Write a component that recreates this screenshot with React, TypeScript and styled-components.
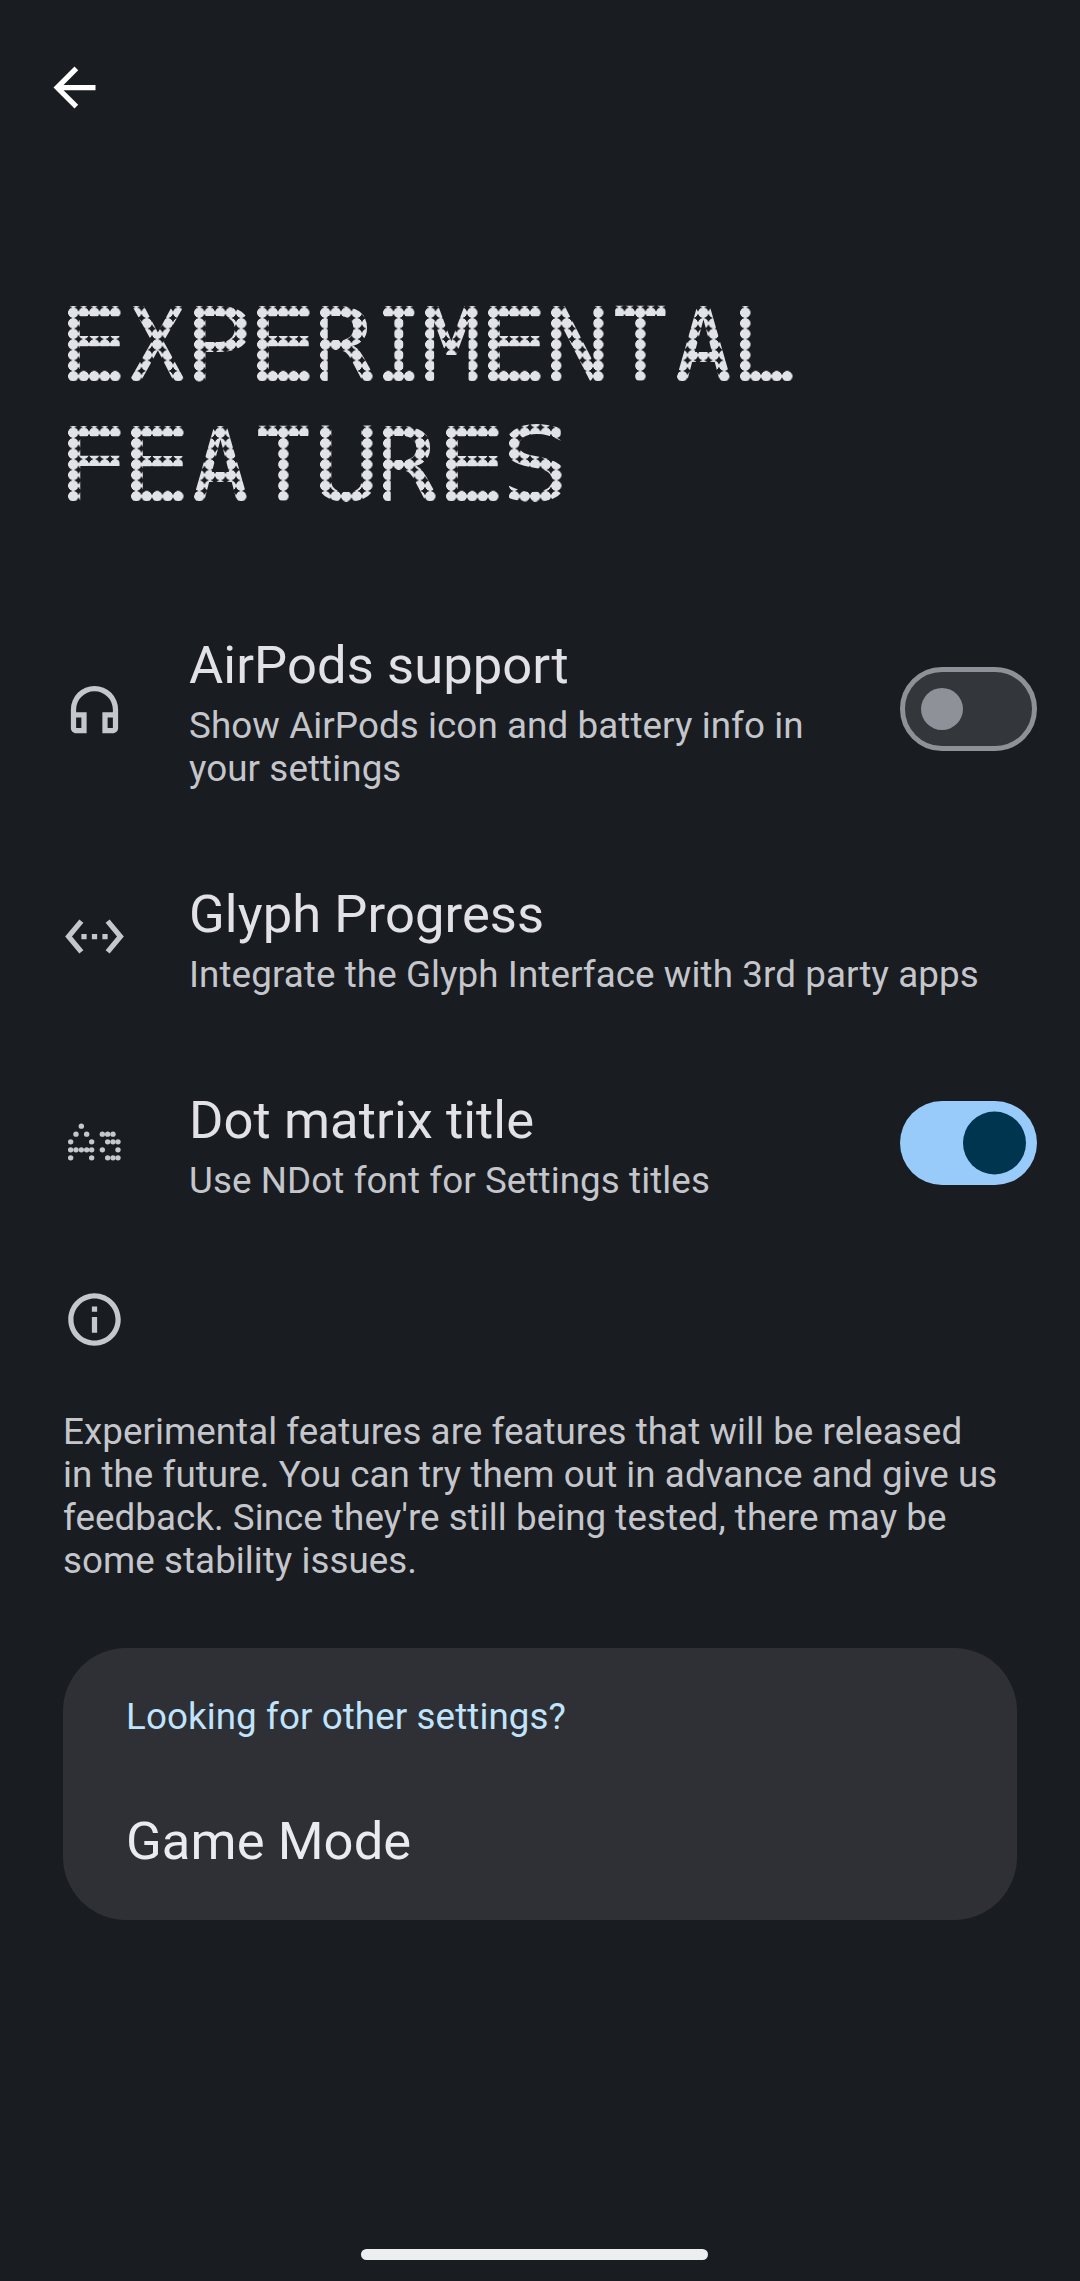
import styled, { createGlobalStyle } from "styled-components";

const GlobalStyle = createGlobalStyle`
  html, body {
    margin: 0;
    padding: 0;
    background: #191c20;
  }
  body {
    font-family: Roboto, "Noto Sans", sans-serif;
    letter-spacing: 0.09px;
  }
`;

const Page = styled.div`
  position: relative;
  width: 1080px;
  height: 2281px;
  overflow: hidden;
  background: #191c20;
`;

const TopBar = styled.div`
  display: flex;
  align-items: center;
  height: 63px;
  padding: 56px 0 0 43px;
  color: #ffffff;
`;

const Icon = styled.svg`
  display: block;
  width: 63px;
  height: 63px;
  fill: currentColor;
  flex: none;
`;

const PageTitle = styled.h1`
  margin: 153px 0 0 68px;
  font-weight: 400;
`;

const TitleLine = styled.div`
  display: flex;
  height: 120.3px;
`;

const LetterCell = styled.span<{ $cols: number }>`
  display: block;
  flex: none;
  width: ${(p) => p.$cols * 10.5}px;
  margin-right: 10.5px;
  height: 120.3px;
`;

/* real letters stretched to the cell, with the dot grid showing through them */
const DotGlyph = styled.span<{ $k: number; $x: number; $cols: number }>`
  display: block;
  box-sizing: border-box;
  width: ${(p) => (p.$cols * 10.5) / p.$k}px;
  height: 120.3px;
  padding-top: 14px;
  font-family: "DejaVu Sans Mono", monospace;
  font-size: 100px;
  line-height: 120px;
  letter-spacing: 0;
  white-space: nowrap;
  text-indent: ${(p) => -p.$x}px;
  color: transparent;
  -webkit-text-stroke: 2px transparent;
  transform: scaleX(${(p) => p.$k});
  transform-origin: 0 0;
  background-image: radial-gradient(
    ${(p) => 5.4 / p.$k}px 5.4px at center,
    #e1e3e8 90%,
    rgba(225, 227, 232, 0) 100%
  );
  background-size: ${(p) => 10.5 / p.$k}px 10.6px;
  background-position: 0 3.6px;
  -webkit-background-clip: text;
  background-clip: text;
`;

const SettingsList = styled.div`
  margin-top: 75px;
`;

const Row = styled.div`
  display: flex;
  align-items: center;
  padding: 42px 43px 47px 63px;
`;

const RowIcon = styled.div`
  width: 126px;
  flex: none;
  margin-bottom: 1px;
  color: #c5c7cc;
`;

const RowBody = styled.div`
  flex: 1;
  min-width: 0;
`;

const RowTitle = styled.div`
  font-size: 52.5px;
  line-height: 70px;
  color: #e2e2e6;
  margin-bottom: 4px;
`;

const RowSummary = styled.div`
  font-size: 36.75px;
  line-height: 43px;
  color: #c4c6cc;
  max-width: 680px;
`;

const WideSummary = styled(RowSummary)`
  max-width: none;
  white-space: nowrap;
`;

const Toggle = styled.div<{ $on?: boolean }>`
  position: relative;
  flex: none;
  box-sizing: border-box;
  width: 137px;
  height: 84px;
  margin-left: 40px;
  margin-bottom: 1px;
  border-radius: 42px;
  background: ${(p) => (p.$on ? "#98cbfa" : "#33363b")};
  border: ${(p) => (p.$on ? "none" : "5px solid #8e9198")};
`;

const Thumb = styled.div<{ $on?: boolean }>`
  position: absolute;
  top: 50%;
  border-radius: 50%;
  transform: translateY(-50%);
  width: ${(p) => (p.$on ? "63px" : "42px")};
  height: ${(p) => (p.$on ? "63px" : "42px")};
  left: ${(p) => (p.$on ? "63px" : "16px")};
  background: ${(p) => (p.$on ? "#003550" : "#8e9198")};
`;

const InfoBlock = styled.div`
  padding: 39px 63px 0;
  color: #c5c7cc;
`;

const InfoIconWrap = styled.div`
  margin-bottom: 59px;
`;

const InfoText = styled.p`
  margin: 0;
  font-size: 36.75px;
  line-height: 43px;
  letter-spacing: 0.05px;
  color: #c4c6cc;
`;

const Card = styled.div`
  box-sizing: border-box;
  width: 954px;
  height: 272px;
  margin: 66px 0 0 63px;
  padding: 46px 63px 0;
  border-radius: 63px;
  background: #2e3035;
`;

const CardLabel = styled.div`
  font-size: 36.75px;
  line-height: 46px;
  color: #c0e4fd;
`;

const CardItem = styled.div`
  margin-top: 66px;
  font-size: 52.5px;
  line-height: 70px;
  color: #e9ebf0;
`;

const NavPill = styled.div`
  position: absolute;
  left: 361px;
  top: 2249px;
  width: 347px;
  height: 11px;
  border-radius: 6px;
  background: #eceef0;
`;

const AA_DOTS: [number, number][] = [
  [124, 50], [108, 74], [140, 74], [92, 97], [155, 97],
  [92, 121], [108, 121], [124, 121], [140, 121], [155, 121], [92, 145], [155, 145],
  [187, 74], [203, 74], [219, 74], [203, 97], [219, 97], [234, 97],
  [187, 121], [234, 121], [203, 145], [219, 145], [234, 145],
];

// left edge and width of each capital in the title font at 100px
const GLYPHS: Record<string, [number, number]> = {
  E: [11, 42],
  X: [1, 58],
  P: [11, 43],
  R: [11, 47],
  I: [9, 42],
  M: [6, 48],
  N: [9, 42],
  T: [0, 60],
  A: [2, 56],
  L: [13, 42],
  F: [13, 40],
  U: [9, 42],
  S: [9, 42],
};

function AaIcon() {
  return (
    <Icon viewBox="0 0 63 63">
      {AA_DOTS.map(([x, y]) => (
        <circle key={`${x}-${y}`} cx={x / 3 - 23} cy={y / 3 - 1.5} r={2.7} />
      ))}
    </Icon>
  );
}

function DotWord({ text }: { text: string }) {
  return (
    <TitleLine>
      {text.split("").map((c, i) => {
        const [x, w] = GLYPHS[c];
        const cols = c === "I" ? 3 : 5;
        return (
          <LetterCell key={i} $cols={cols}>
            <DotGlyph $cols={cols} $x={x} $k={(cols * 10.5) / w}>
              {c}
            </DotGlyph>
          </LetterCell>
        );
      })}
    </TitleLine>
  );
}

export default function App() {
  return (
    <Page>
      <GlobalStyle />
      <TopBar>
        <Icon viewBox="0 0 24 24">
          <path d="M20 11H7.83l5.59-5.59L12 4l-8 8 8 8 1.41-1.41L7.83 13H20v-2z" />
        </Icon>
      </TopBar>
      <PageTitle>
        <DotWord text="EXPERIMENTAL" />
        <DotWord text="FEATURES" />
      </PageTitle>
      <SettingsList>
        <Row>
          <RowIcon>
            <Icon viewBox="0 0 24 24">
              <path d="M12 3a9 9 0 0 0-9 9v7c0 1.1.9 2 2 2h4v-8H5v-1c0-3.87 3.13-7 7-7s7 3.13 7 7v1h-4v8h4c1.1 0 2-.9 2-2v-7a9 9 0 0 0-9-9zM7 15v4H5v-4h2zm12 4h-2v-4h2v4z" />
            </Icon>
          </RowIcon>
          <RowBody>
            <RowTitle>AirPods support</RowTitle>
            <RowSummary>Show AirPods icon and battery info in your settings</RowSummary>
          </RowBody>
          <Toggle>
            <Thumb />
          </Toggle>
        </Row>
        <Row>
          <RowIcon>
            <Icon viewBox="0 0 24 24">
              <path d="M7.77 6.76L6.23 5.48.82 12l5.41 6.52 1.54-1.28L3.42 12l4.35-5.24zM7 13h2v-2H7v2zm10-2h-2v2h2v-2zm-6 2h2v-2h-2v2zm6.77-7.52l-1.54 1.28L20.58 12l-4.35 5.24 1.54 1.28L23.18 12l-5.41-6.52z" />
            </Icon>
          </RowIcon>
          <RowBody>
            <RowTitle>Glyph Progress</RowTitle>
            <WideSummary>Integrate the Glyph Interface with 3rd party apps</WideSummary>
          </RowBody>
        </Row>
        <Row>
          <RowIcon>
            <AaIcon />
          </RowIcon>
          <RowBody>
            <RowTitle>Dot matrix title</RowTitle>
            <RowSummary>Use NDot font for Settings titles</RowSummary>
          </RowBody>
          <Toggle $on>
            <Thumb $on />
          </Toggle>
        </Row>
      </SettingsList>
      <InfoBlock>
        <InfoIconWrap>
          <Icon viewBox="0 0 24 24">
            <path d="M11 7h2v2h-2zm0 4h2v6h-2zm1-9C6.48 2 2 6.48 2 12s4.48 10 10 10 10-4.48 10-10S17.52 2 12 2zm0 18c-4.41 0-8-3.59-8-8s3.59-8 8-8 8 3.59 8 8-3.59 8-8 8z" />
          </Icon>
        </InfoIconWrap>
        <InfoText>
          Experimental features are features that will be released
          <br />
          in the future. You can try them out in advance and give us feedback. Since they're still being
          tested, there may be some stability issues.
        </InfoText>
      </InfoBlock>
      <Card>
        <CardLabel>Looking for other settings?</CardLabel>
        <CardItem>Game Mode</CardItem>
      </Card>
      <NavPill />
    </Page>
  );
}
